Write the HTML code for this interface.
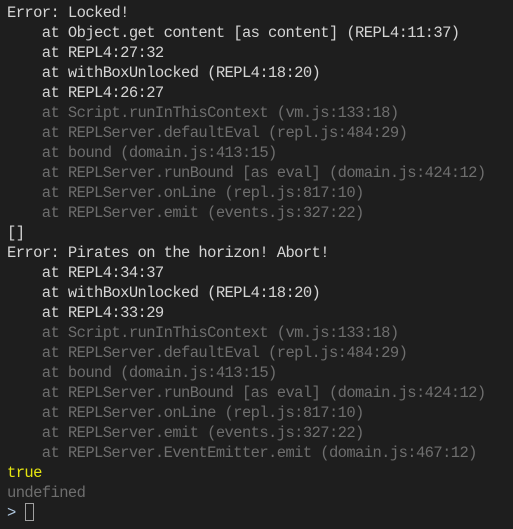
<!DOCTYPE html>
<html><head><style>
html,body{margin:0;padding:0;background:#1e1e1e;width:513px;height:529px;overflow:hidden}
pre{margin:0;padding:3px 0 0 7px;font-family:"Liberation Mono",monospace;font-size:15.5px;letter-spacing:-0.6px;line-height:20px;color:#d4d4d4;white-space:pre}
.g{color:#6e6e6e}.y{color:#e5e510}
.c{display:inline-block;width:9px;height:18px;border:1px solid #a0a0a0;box-sizing:border-box;vertical-align:-4px;margin-left:9px}
.p{color:#b0c8e0}
</style></head><body><pre>Error: Locked!
    at Object.get content [as content] (REPL4:11:37)
    at REPL4:27:32
    at withBoxUnlocked (REPL4:18:20)
    at REPL4:26:27
<span class="g">    at Script.runInThisContext (vm.js:133:18)
    at REPLServer.defaultEval (repl.js:484:29)
    at bound (domain.js:413:15)
    at REPLServer.runBound [as eval] (domain.js:424:12)
    at REPLServer.onLine (repl.js:817:10)
    at REPLServer.emit (events.js:327:22)</span>
[]
Error: Pirates on the horizon! Abort!
    at REPL4:34:37
    at withBoxUnlocked (REPL4:18:20)
    at REPL4:33:29
<span class="g">    at Script.runInThisContext (vm.js:133:18)
    at REPLServer.defaultEval (repl.js:484:29)
    at bound (domain.js:413:15)
    at REPLServer.runBound [as eval] (domain.js:424:12)
    at REPLServer.onLine (repl.js:817:10)
    at REPLServer.emit (events.js:327:22)
    at REPLServer.EventEmitter.emit (domain.js:467:12)</span>
<span class="y">true</span>
<span class="g">undefined</span>
<span class="p">&gt;</span><span class="c"></span></pre></body></html>
